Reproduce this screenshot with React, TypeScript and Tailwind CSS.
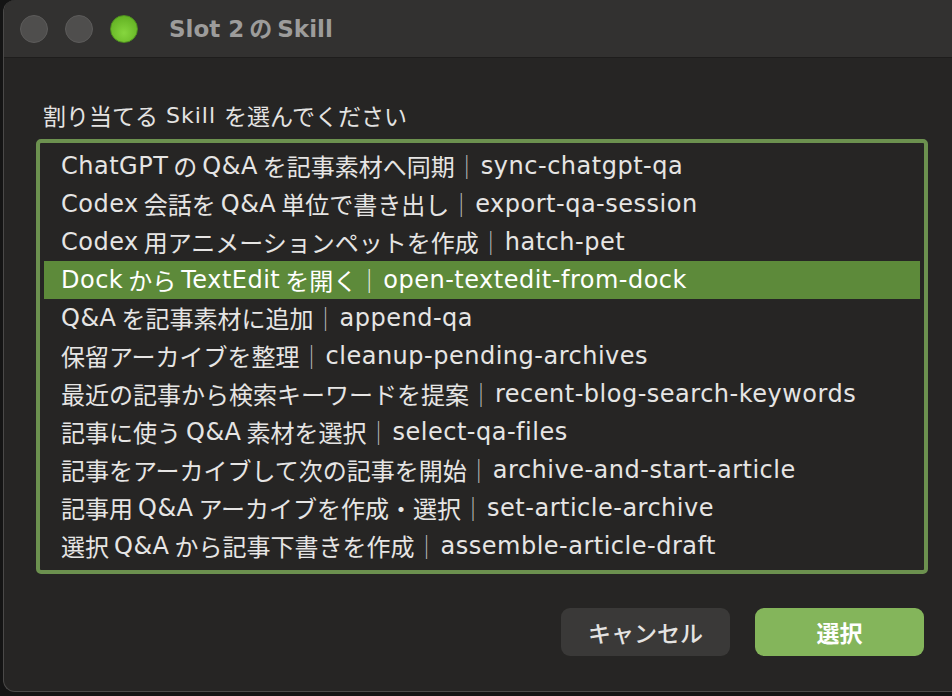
import React from "react";

const skills: [string, string][] = [
  ["ChatGPTのQ&Aを記事素材へ同期", "sync-chatgpt-qa"],
  ["Codex会話をQ&A単位で書き出し", "export-qa-session"],
  ["Codex用アニメーションペットを作成", "hatch-pet"],
  ["DockからTextEditを開く", "open-textedit-from-dock"],
  ["Q&Aを記事素材に追加", "append-qa"],
  ["保留アーカイブを整理", "cleanup-pending-archives"],
  ["最近の記事から検索キーワードを提案", "recent-blog-search-keywords"],
  ["記事に使うQ&A素材を選択", "select-qa-files"],
  ["記事をアーカイブして次の記事を開始", "archive-and-start-article"],
  ["記事用Q&Aアーカイブを作成・選択", "set-article-archive"],
  ["選択Q&Aから記事下書きを作成", "assemble-article-draft"],
];

const font = {
  fontFamily: '"DejaVu Sans", "Noto Sans CJK JP", sans-serif',
};

const LATIN = /^[A-Za-z0-9&\- ]+$/;

// Split mixed Japanese / Latin text; Japanese runs use the CJK face at
// their own size, Latin runs get a little air on each side.
function Mixed({
  text,
  cjk,
  latin,
  gap,
}: {
  text: string;
  cjk: string;
  latin: string;
  gap: "sm" | "lg";
}) {
  const parts = text.split(/([A-Za-z0-9&\- ]+)/).filter((p) => p.length > 0);
  return (
    <>
      {parts.map((p, i) => {
        if (!LATIN.test(p))
          return (
            <span key={i} className={`font-['Noto_Sans_CJK_JP'] ${cjk}`}>
              {p}
            </span>
          );
        const l = i > 0 ? (gap === "sm" ? "ml-[5px]" : "ml-[8px]") : "";
        const r = i < parts.length - 1 ? (gap === "sm" ? "mr-[5px]" : "mr-[8px]") : "";
        return (
          <span key={i} className={`${latin} ${l} ${r}`}>
            {p}
          </span>
        );
      })}
    </>
  );
}

export default function App() {
  const selected = 3;
  return (
    <div className="w-[952px] h-[696px] bg-[#141414] overflow-hidden" style={font}>
      <div className="ml-[3px] w-[949px] h-[692px] bg-[#262524] rounded-l-[12px] border border-[#4a4948] border-r-0 border-t-0 flex flex-col overflow-hidden">
        {/* title bar */}
        <div className="h-[58px] shrink-0 bg-[#323130] border-b border-[#1e1d1c] flex items-center pl-[16px]">
          <div className="flex items-center gap-[17px]">
            <span className="w-[28px] h-[28px] rounded-full bg-[#4f4e4d] border border-[#5c5b5a]" />
            <span className="w-[28px] h-[28px] rounded-full bg-[#4f4e4d] border border-[#5c5b5a]" />
            <span className="w-[28px] h-[28px] rounded-full bg-[radial-gradient(circle_at_50%_65%,#86d63e,#5aa81c)] border border-[#4e8f1f]" />
          </div>
          <div className="ml-[31px] flex items-baseline font-bold text-[#9d9c9b] whitespace-nowrap leading-none">
            <Mixed text="Slot 2のSkill" cjk="text-[23px]" latin="text-[23px]" gap="sm" />
          </div>
        </div>

        {/* body */}
        <div className="flex-1 flex flex-col pl-[32px] pr-[24px]">
          <div className="mt-[42px] h-[30px] flex items-center pl-[7px] text-[#e4e3e2] whitespace-nowrap">
            <Mixed
              text="割り当てるSkillを選んでください"
              cjk="text-[23px]"
              latin="text-[22px] tracking-[1px]"
              gap="lg"
            />
          </div>
          <div className="mt-[9px] h-[435px] border-[4px] border-[#6c914f] rounded-[5px] pt-[4px] px-[4px]">
            {skills.map(([ja, id], i) => (
              <div
                key={id}
                className={`h-[38px] flex items-center pl-[17px] leading-none whitespace-nowrap ${
                  i === selected ? "bg-[#5d8a3a] text-white" : "text-[#e6e5e4]"
                }`}
              >
                <Mixed
                  text={ja}
                  cjk="text-[24px]"
                  latin="text-[24px] tracking-[0.5px]"
                  gap="sm"
                />
                <span
                  className={`font-['Noto_Sans_CJK_JP'] text-[24px] ${
                    i === selected ? "text-[#e8efe2]" : "text-[#b5b4b3]"
                  }`}
                >
                  ｜
                </span>
                <span className="ml-[2px] text-[24px] tracking-[0.5px]">{id}</span>
              </div>
            ))}
          </div>
          <div className="mt-[34px] flex justify-end gap-[25px] pr-[4px]">
            <button className="w-[169px] h-[48px] rounded-[9px] bg-[#3a3938] font-['Noto_Sans_CJK_JP'] text-[23px] text-[#e4e3e2] font-medium">
              キャンセル
            </button>
            <button className="w-[169px] h-[48px] rounded-[9px] bg-[#84b55b] font-['Noto_Sans_CJK_JP'] text-[23px] text-white font-bold">
              選択
            </button>
          </div>
        </div>
      </div>
    </div>
  );
}
